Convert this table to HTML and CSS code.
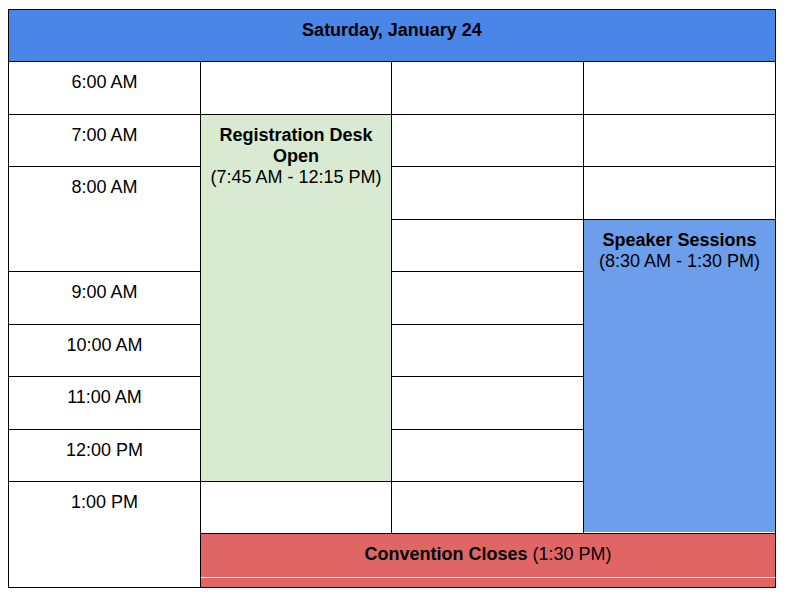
FILE: index.html
```html
<!DOCTYPE html>
<html>
<head>
<meta charset="utf-8">
<link rel="stylesheet" href="styles.css">
</head>
<body>
<div class="schedule">
  <div class="cell header">Saturday, January 24</div>

  <div class="cell time r2">6:00 AM</div>
  <div class="cell c2 r2"></div>
  <div class="cell c3 r2"></div>
  <div class="cell c4 r2"></div>

  <div class="cell time r3">7:00 AM</div>
  <div class="cell event registration">
    <div class="title">Registration Desk Open</div>
    <div>(7:45 AM - 12:15 PM)</div>
  </div>
  <div class="cell c3 r3"></div>
  <div class="cell c4 r3"></div>

  <div class="cell time r4 span2">8:00 AM</div>
  <div class="cell c3 r4"></div>
  <div class="cell c4 r4"></div>

  <div class="cell c3 r5"></div>
  <div class="cell event speaker">
    <div class="title">Speaker Sessions</div>
    <div>(8:30 AM - 1:30 PM)</div>
  </div>

  <div class="cell time r6">9:00 AM</div>
  <div class="cell c3 r6"></div>

  <div class="cell time r7">10:00 AM</div>
  <div class="cell c3 r7"></div>

  <div class="cell time r8">11:00 AM</div>
  <div class="cell c3 r8"></div>

  <div class="cell time r9">12:00 PM</div>
  <div class="cell c3 r9"></div>

  <div class="cell time last">1:00 PM</div>
  <div class="cell c2 r10"></div>
  <div class="cell c3 r10"></div>

  <div class="cell event closes"><span class="title">Convention Closes</span> (1:30 PM)</div>
  <div class="cell closes-tail"></div>
</div>
</body>
</html>
```

FILE: styles.css
```css
html, body {
  margin: 0;
  padding: 0;
  background: #fff;
}

body {
  padding: 9px 0 0 8px;
  font-family: "Liberation Sans", Arial, sans-serif;
  font-size: 18px;
  line-height: 21px;
  color: #000;
}

.schedule {
  display: grid;
  grid-template-columns: 192px 191px 192px 192px;
  grid-template-rows: 52px 53px 52px 53px 52px 53px 52px 53px 52px 52px 44px 10px;
  width: max-content;
  border-left: 1px solid #000;
  border-top: 1px solid #000;
}

.cell {
  box-sizing: border-box;
  border-right: 1px solid #000;
  border-bottom: 1px solid #000;
  padding: 10px 4px 0;
  text-align: center;
  background: #fff;
}

.header {
  grid-column: 1 / 5;
  grid-row: 1;
  background: #4a86e8;
  font-weight: bold;
  padding-top: 10px;
}

.time { grid-column: 1; }
.c2 { grid-column: 2; }
.c3 { grid-column: 3; }
.c4 { grid-column: 4; }

.r2 { grid-row: 2; }
.r3 { grid-row: 3; }
.r4 { grid-row: 4; }
.r5 { grid-row: 5; }
.r6 { grid-row: 6; }
.r7 { grid-row: 7; }
.r8 { grid-row: 8; }
.r9 { grid-row: 9; }
.r10 { grid-row: 10; }

.time.span2 { grid-row: 4 / 6; }
.time.last { grid-row: 10 / 13; }

.title { font-weight: bold; }

.registration {
  grid-column: 2;
  grid-row: 3 / 10;
  background: #d9ead3;
}

.speaker {
  grid-column: 4;
  grid-row: 5 / 11;
  background: #6d9eeb;
  box-shadow: inset 0 -1px 0 #fff;
}

.closes {
  grid-column: 2 / 5;
  grid-row: 11;
  background: #e06666;
  border-bottom-color: #fff;
  padding-top: 10px;
}

.closes-tail {
  grid-column: 2 / 5;
  grid-row: 12;
  background: #e06666;
  padding: 0;
}
```
